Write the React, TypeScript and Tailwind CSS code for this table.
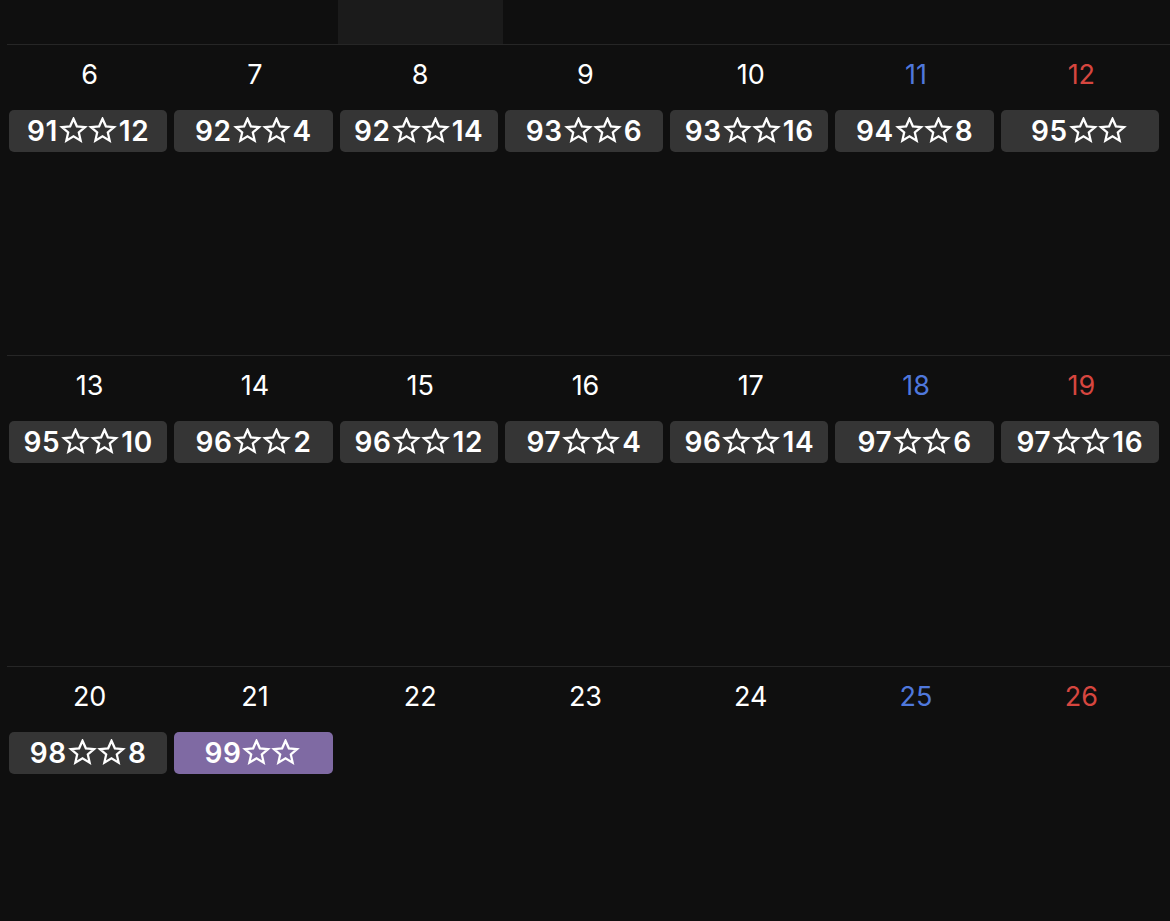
import React from "react";

type Cell = { d: number; badge?: string; purple?: boolean };

const weeks: Cell[][] = [
  [
    { d: 6, badge: "91|12" },
    { d: 7, badge: "92|4" },
    { d: 8, badge: "92|14" },
    { d: 9, badge: "93|6" },
    { d: 10, badge: "93|16" },
    { d: 11, badge: "94|8" },
    { d: 12, badge: "95|" },
  ],
  [
    { d: 13, badge: "95|10" },
    { d: 14, badge: "96|2" },
    { d: 15, badge: "96|12" },
    { d: 16, badge: "97|4" },
    { d: 17, badge: "96|14" },
    { d: 18, badge: "97|6" },
    { d: 19, badge: "97|16" },
  ],
  [
    { d: 20, badge: "98|8" },
    { d: 21, badge: "99|", purple: true },
    { d: 22 },
    { d: 23 },
    { d: 24 },
    { d: 25 },
    { d: 26 },
  ],
];

function Star() {
  return (
    <svg width="29" height="26" viewBox="0 0 24 24" className="shrink-0" aria-hidden>
      <path
        d="M12 1.6l3.1 7 7.6.7-5.8 5 1.7 7.5L12 17.8l-6.6 4 1.7-7.5-5.8-5 7.6-.7z"
        fill="none"
        stroke="white"
        strokeWidth="2.1"
        strokeLinejoin="miter"
      />
    </svg>
  );
}

function Badge({ text, purple }: { text: string; purple?: boolean }) {
  const [a, b] = text.split("|");
  return (
    <div
      className={`ml-[2px] mr-[5px] h-[42px] rounded-[5px] flex items-center justify-center text-white font-semibold text-[28px] leading-none tracking-[0.6px] ${
        purple ? "bg-[#7f6aa3]" : "bg-[#353535]"
      }`}
    >
      <span>{a}</span>
      <span className="flex items-center ml-[1px] mr-[2px] -mt-[2px]">
        <Star />
        <Star />
      </span>
      {b && <span>{b}</span>}
    </div>
  );
}

export default function App() {
  return (
    <div
      className="w-[1170px] h-[921px] overflow-hidden bg-[#0f0f0f] pl-[7px]"
      style={{ fontFamily: "Inter, 'Noto Sans', sans-serif" }}
    >
      <div className="grid grid-cols-7 pr-[6px] h-[44px]">
        <div />
        <div />
        <div className="bg-[#1b1b1b]" />
        <div />
        <div />
        <div />
        <div />
      </div>
      {weeks.map((w, i) => (
        <div key={i} className="border-t border-[#262626] h-[311px]">
          <div className="grid grid-cols-7 pr-[6px]">
            {w.map((c, j) => (
              <div key={j} className="flex flex-col">
                <div
                  className={`h-[65px] pt-[13px] text-center text-[27px] leading-[34px] ${
                    j === 5 ? "text-[#4f78dc]" : j === 6 ? "text-[#d6463f]" : "text-white"
                  }`}
                >
                  {c.d}
                </div>
                {c.badge && <Badge text={c.badge} purple={c.purple} />}
              </div>
            ))}
          </div>
        </div>
      ))}
    </div>
  );
}
